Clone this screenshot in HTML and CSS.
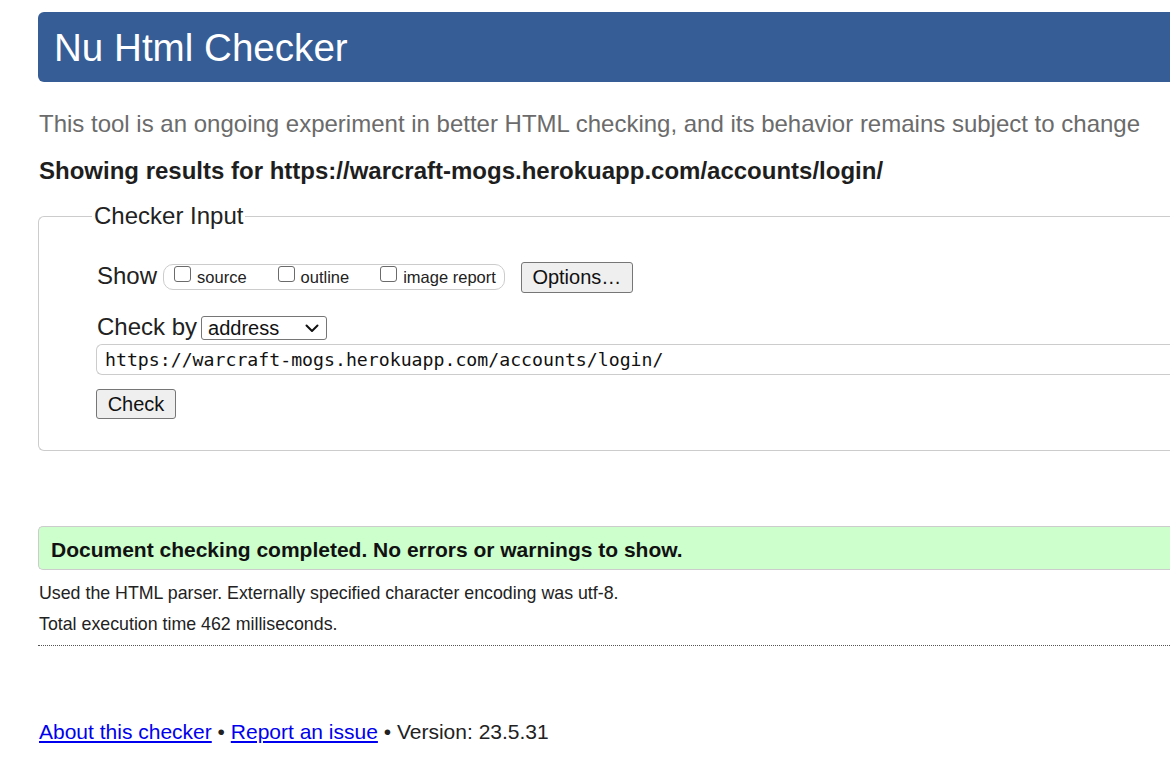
FILE: index.html
```html
<!DOCTYPE html>
<html lang="en">
<head>
<meta charset="utf-8">
<title>Nu Html Checker</title>
<link rel="stylesheet" href="styles.css">
</head>
<body>
<div class="page">
  <h1 class="banner">Nu Html Checker</h1>
  <p class="about">This tool is an ongoing experiment in better HTML checking, and its behavior remains subject to change</p>
  <p class="showing">Showing results for https://warcraft-mogs.herokuapp.com/accounts/login/</p>

  <form class="checker">
    <fieldset class="input-set">
      <legend class="legend">Checker Input</legend>
      <div class="inner">
        <div class="row row-show">
          <span class="row-label">Show</span>
          <span class="pill">
            <label class="opt"><input type="checkbox" class="cb"><span class="opt-text">source</span></label>
            <label class="opt"><input type="checkbox" class="cb"><span class="opt-text">outline</span></label>
            <label class="opt"><input type="checkbox" class="cb"><span class="opt-text">image report</span></label>
          </span>
          <button type="button" class="btn btn-options">Options…</button>
        </div>
        <div class="row row-by">
          <label class="row-label label-by" for="docselect">Check by</label>
          <span class="select-wrap">
            <select id="docselect" class="select">
              <option>address</option>
              <option>file upload</option>
              <option>text input</option>
            </select>
            <svg class="chev" width="14" height="9" viewBox="0 0 14 9" aria-hidden="true"><path d="M1.5 1.5 L7 7 L12.5 1.5" fill="none" stroke="#111" stroke-width="2" stroke-linecap="round" stroke-linejoin="round"/></svg>
          </span>
        </div>
        <div class="row row-url">
          <input class="url" type="url" value="https://warcraft-mogs.herokuapp.com/accounts/login/">
        </div>
        <div class="row row-submit">
          <button type="button" class="btn btn-check">Check</button>
        </div>
      </div>
    </fieldset>
  </form>

  <div class="success">Document checking completed. No errors or warnings to show.</div>
  <p class="details">Used the HTML parser. Externally specified character encoding was utf-8.</p>
  <p class="details details-time">Total execution time 462 milliseconds.</p>
  <hr class="sep">
  <p class="footer"><a href="#about">About this checker</a> • <a href="#issue">Report an issue</a> • Version: 23.5.31</p>
</div>
</body>
</html>
```

FILE: styles.css
```css
html, body {
  margin: 0;
  padding: 0;
  background: #ffffff;
  overflow: hidden;
}

body {
  font-family: "Liberation Sans", Arial, sans-serif;
  color: #222222;
}

.page {
  padding-left: 38px;
}

.banner {
  margin: 12px 0 0;
  height: 70px;
  box-sizing: border-box;
  padding: 2px 0 0 16px;
  line-height: 68px;
  font-size: 38.6px;
  font-weight: normal;
  color: #ffffff;
  background: #365d95;
  border-radius: 6px 0 0 6px;
}

.about {
  margin: 28px 0 0 1px;
  font-size: 24px;
  line-height: 28px;
  color: #6b6b6b;
  white-space: nowrap;
}

.showing {
  margin: 19px 0 0 1px;
  font-size: 24px;
  line-height: 28px;
  font-weight: bold;
  color: #1e1e1e;
  white-space: nowrap;
}

.checker {
  margin: 17px 0 0;
}

.input-set {
  margin: 0;
  min-width: 0;
  padding: 0 0 31px 57px;
  border: 1px solid #cccccc;
  border-right: 0;
  border-radius: 6px 0 0 6px;
}

.legend {
  margin-left: -4px;
  padding: 0 2px;
  font-size: 24px;
  line-height: 28px;
  color: #222222;
}

.inner {
  padding-top: 32px;
}

.row {
  display: flex;
  align-items: flex-start;
}

.row-label {
  font-size: 24px;
  line-height: 28px;
  color: #222222;
}

.row-show .row-label {
  margin-left: 1px;
  margin-right: 6px;
}

.pill {
  margin-top: 2px;
  height: 26px;
  box-sizing: border-box;
  display: flex;
  align-items: flex-start;
  gap: 31px;
  padding: 0 8px 0 10px;
  border: 1px solid #cccccc;
  border-radius: 10px;
}

.opt {
  display: flex;
  align-items: flex-start;
  gap: 6px;
}

.cb {
  appearance: none;
  -webkit-appearance: none;
  box-sizing: border-box;
  width: 17px;
  height: 16px;
  margin: 1px 0 0;
  background: #ffffff;
  border: 1px solid #6b6b6b;
  border-radius: 3px;
}

.opt-text {
  padding-top: 3px;
  font-size: 16.5px;
  line-height: 19px;
  color: #222222;
}

.btn {
  font-family: "Liberation Sans", Arial, sans-serif;
  font-size: 20px;
  color: #111111;
  background: #efefef;
  border: 1px solid #767676;
  border-radius: 3px;
  padding: 0;
}

.btn-options {
  margin-left: 16px;
  width: 112px;
  height: 31px;
}

.row-by {
  margin-top: 20px;
}

.label-by {
  margin-left: 1px;
  margin-right: 4px;
}

.select-wrap {
  position: relative;
  display: inline-flex;
  margin-top: 3px;
}

.select {
  appearance: none;
  -webkit-appearance: none;
  box-sizing: border-box;
  width: 126px;
  height: 24px;
  margin: 0;
  padding: 0 0 0 6px;
  font-family: "Liberation Sans", Arial, sans-serif;
  font-size: 20px;
  line-height: 22px;
  color: #111111;
  background: #ffffff;
  border: 1px solid #767676;
  border-radius: 3px;
}

.chev {
  position: absolute;
  right: 8px;
  top: 8px;
  pointer-events: none;
}

.row-url {
  margin-top: 3px;
}

.url {
  flex: 1;
  min-width: 0;
  height: 31px;
  box-sizing: border-box;
  padding: 0 0 0 8px;
  font-family: "DejaVu Sans Mono", "Liberation Mono", monospace;
  font-size: 18.2px;
  color: #111111;
  border: 1px solid #cccccc;
  border-right: 0;
  border-radius: 6px 0 0 6px;
  outline: none;
}

.row-submit {
  margin-top: 14px;
}

.btn-check {
  width: 80px;
  height: 30px;
}

.success {
  margin-top: 75px;
  height: 44px;
  box-sizing: border-box;
  padding: 3px 0 0 12px;
  line-height: 39px;
  font-size: 21px;
  font-weight: bold;
  color: #111111;
  background: #ccffcc;
  border: 1px solid #cccccc;
  border-right: 0;
  border-radius: 5px 0 0 5px;
}

.details {
  margin: 12.5px 0 0 1px;
  font-size: 17.8px;
  line-height: 20px;
  color: #222222;
}

.details-time {
  margin-top: 11px;
}

.sep {
  margin: 11px 0 0;
  height: 0;
  border: 0;
  border-top: 1px dotted #555555;
}

.footer {
  margin: 74px 0 0 1px;
  font-size: 21px;
  line-height: 24px;
  color: #222222;
}

.footer a {
  color: #0000ee;
  text-decoration: underline;
}
```
